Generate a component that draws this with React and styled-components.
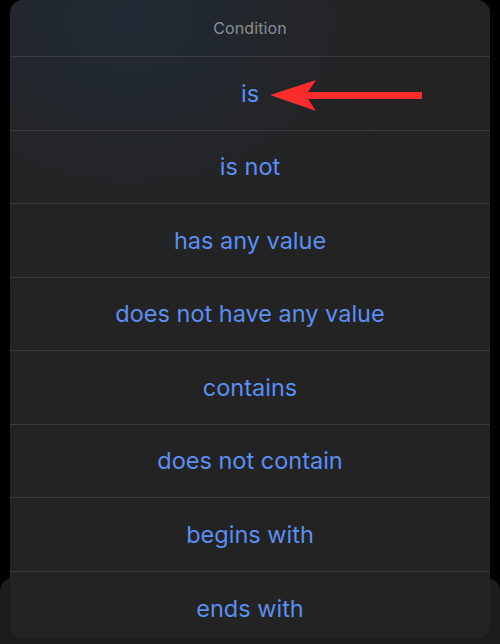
import React from "react";
import styled, {createGlobalStyle} from "styled-components";

const GlobalStyle = createGlobalStyle`
  html, body {
    margin: 0;
    padding: 0;
    background: #000;
  }
  body {
    width: 500px;
    height: 644px;
    overflow: hidden;
    font-family: "Inter", "Liberation Sans", sans-serif;
  }
`;

const Screen = styled.div`
  position: relative;
  width: 500px;
  height: 644px;
  background: #000;
  overflow: hidden;
`;

// the cancel panel peeking out under the sheet
const BackPanel = styled.div`
  position: absolute;
  left: 0;
  right: 0;
  top: 578px;
  height: 90px;
  background: #1c1c1c;
  border-radius: 13px;
`;

const Sheet = styled.div`
  position: relative;
  margin: 0 10px;
  height: 638px;
  border-radius: 13px;
  overflow: hidden;
  background: radial-gradient(ellipse 380px 300px at 120px 20px, #212a35 0%, #232426 55%, #232323 100%);
  display: flex;
  flex-direction: column;
`;

const Header = styled.div`
  height: 57px;
  flex-shrink: 0;
  display: flex;
  align-items: center;
  justify-content: center;
  color: #8d8d8f;
  font-size: 16px;
  letter-spacing: 0.1px;
  border-bottom: 1px solid #3b3b3d;
  box-sizing: border-box;
`;

const Option = styled.div`
  position: relative;
  height: 73.5px;
  flex-shrink: 0;
  display: flex;
  align-items: center;
  justify-content: center;
  color: #5b8ff2;
  font-size: 23.5px;
  box-sizing: border-box;
  border-bottom: ${p => (p.$last ? "none" : "1px solid #3b3b3d")};
`;

const Arrow = styled.svg`
  position: absolute;
  left: 250px;
  top: 21px;
`;

const options = [
    "is",
    "is not",
    "has any value",
    "does not have any value",
    "contains",
    "does not contain",
    "begins with",
    "ends with"
];

const App = () => (
    <Screen>
        <GlobalStyle/>
        <BackPanel/>
        <Sheet>
            <Header>Condition</Header>
            {options.map((o, i) => (
                <Option key={o} $last={i === options.length - 1}>
                    {o}
                    {i === 0 && (
                        <Arrow width="170" height="36" viewBox="0 0 170 36">
                            <path d="M10 17 L56 2 L48 14 L162 14 L162 21 L48 21 L56 33 Z" fill="#fd2c2c"/>
                        </Arrow>
                    )}
                </Option>
            ))}
        </Sheet>
    </Screen>
);

export default App;
